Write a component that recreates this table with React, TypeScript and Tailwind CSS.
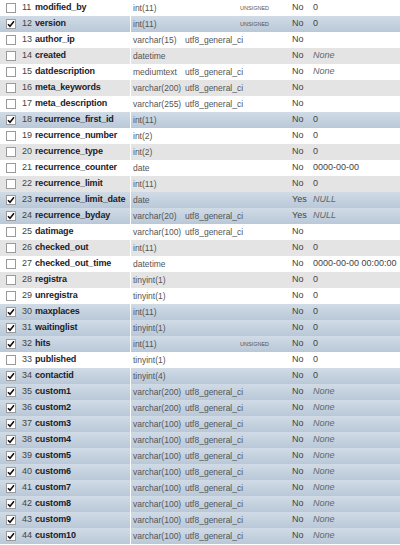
import React from "react";

type Row = {
  n: number;
  name: string;
  type: string;
  coll?: string;
  attr?: string;
  nul: string;
  def?: string;
  defItalic?: boolean;
  checked?: boolean;
};

const rows: Row[] = [
  { n: 11, name: "modified_by", type: "int(11)", attr: "UNSIGNED", nul: "No", def: "0" },
  { n: 12, name: "version", type: "int(11)", attr: "UNSIGNED", nul: "No", def: "0", checked: true },
  { n: 13, name: "author_ip", type: "varchar(15)", coll: "utf8_general_ci", nul: "No" },
  { n: 14, name: "created", type: "datetime", nul: "No", def: "None", defItalic: true },
  { n: 15, name: "datdescription", type: "mediumtext", coll: "utf8_general_ci", nul: "No", def: "None", defItalic: true },
  { n: 16, name: "meta_keywords", type: "varchar(200)", coll: "utf8_general_ci", nul: "No" },
  { n: 17, name: "meta_description", type: "varchar(255)", coll: "utf8_general_ci", nul: "No" },
  { n: 18, name: "recurrence_first_id", type: "int(11)", nul: "No", def: "0", checked: true },
  { n: 19, name: "recurrence_number", type: "int(2)", nul: "No", def: "0" },
  { n: 20, name: "recurrence_type", type: "int(2)", nul: "No", def: "0" },
  { n: 21, name: "recurrence_counter", type: "date", nul: "No", def: "0000-00-00" },
  { n: 22, name: "recurrence_limit", type: "int(11)", nul: "No", def: "0" },
  { n: 23, name: "recurrence_limit_date", type: "date", nul: "Yes", def: "NULL", defItalic: true, checked: true },
  { n: 24, name: "recurrence_byday", type: "varchar(20)", coll: "utf8_general_ci", nul: "Yes", def: "NULL", defItalic: true, checked: true },
  { n: 25, name: "datimage", type: "varchar(100)", coll: "utf8_general_ci", nul: "No" },
  { n: 26, name: "checked_out", type: "int(11)", nul: "No", def: "0" },
  { n: 27, name: "checked_out_time", type: "datetime", nul: "No", def: "0000-00-00 00:00:00" },
  { n: 28, name: "registra", type: "tinyint(1)", nul: "No", def: "0" },
  { n: 29, name: "unregistra", type: "tinyint(1)", nul: "No", def: "0" },
  { n: 30, name: "maxplaces", type: "int(11)", nul: "No", def: "0", checked: true },
  { n: 31, name: "waitinglist", type: "tinyint(1)", nul: "No", def: "0", checked: true },
  { n: 32, name: "hits", type: "int(11)", attr: "UNSIGNED", nul: "No", def: "0", checked: true },
  { n: 33, name: "published", type: "tinyint(1)", nul: "No", def: "0" },
  { n: 34, name: "contactid", type: "tinyint(4)", nul: "No", def: "0", checked: true },
  { n: 35, name: "custom1", type: "varchar(200)", coll: "utf8_general_ci", nul: "No", def: "None", defItalic: true, checked: true },
  { n: 36, name: "custom2", type: "varchar(200)", coll: "utf8_general_ci", nul: "No", def: "None", defItalic: true, checked: true },
  { n: 37, name: "custom3", type: "varchar(100)", coll: "utf8_general_ci", nul: "No", def: "None", defItalic: true, checked: true },
  { n: 38, name: "custom4", type: "varchar(100)", coll: "utf8_general_ci", nul: "No", def: "None", defItalic: true, checked: true },
  { n: 39, name: "custom5", type: "varchar(100)", coll: "utf8_general_ci", nul: "No", def: "None", defItalic: true, checked: true },
  { n: 40, name: "custom6", type: "varchar(100)", coll: "utf8_general_ci", nul: "No", def: "None", defItalic: true, checked: true },
  { n: 41, name: "custom7", type: "varchar(100)", coll: "utf8_general_ci", nul: "No", def: "None", defItalic: true, checked: true },
  { n: 42, name: "custom8", type: "varchar(100)", coll: "utf8_general_ci", nul: "No", def: "None", defItalic: true, checked: true },
  { n: 43, name: "custom9", type: "varchar(100)", coll: "utf8_general_ci", nul: "No", def: "None", defItalic: true, checked: true },
  { n: 44, name: "custom10", type: "varchar(100)", coll: "utf8_general_ci", nul: "No", def: "None", defItalic: true, checked: true },
];

function Box({ checked }: { checked?: boolean }) {
  return (
    <span className="flex h-[10px] w-[10px] shrink-0 items-center justify-center border border-[#9a9a9a] bg-white">
      {checked && (
        <svg width="8" height="8" viewBox="0 0 8 8">
          <path d="M1 4.2 L3 6.2 L7 1.2" fill="none" stroke="#111" strokeWidth="1.6" />
        </svg>
      )}
    </span>
  );
}

export default function App() {
  return (
    <div
      className="w-[400px] h-[545px] overflow-hidden bg-white"
      style={{ fontFamily: '"Liberation Sans", Arial, sans-serif' }}
    >
      {rows.map((r) => {
        const bg = r.checked
          ? "bg-gradient-to-b from-[#d0dbe6] to-[#b9c8d8]"
          : r.n % 2 === 0
          ? "bg-[#e4e4e4]"
          : "bg-white";
        return (
          <div key={r.n} className={`flex h-[16px] items-center ${bg}`}>
            <div className="flex h-full w-[131px] shrink-0 items-center overflow-hidden border-r border-white pl-[6px]">
              <Box checked={r.checked} />
              <span className="ml-[6px] w-[13px] shrink-0 text-[9px] text-[#444]">{r.n}</span>
              <span className="whitespace-nowrap text-[9px] font-bold tracking-[-0.15px] text-[#1b1b2a]">
                {r.name}
              </span>
            </div>
            <div className="w-[54px] shrink-0 whitespace-nowrap pl-[2px] text-[8.5px] text-[#555]">
              {r.type}
            </div>
            <div className="w-[55px] shrink-0 whitespace-nowrap text-[8.5px] text-[#555]">
              {r.coll ?? ""}
            </div>
            <div className="w-[52px] shrink-0 whitespace-nowrap text-[5.5px] text-[#555]">
              {r.attr ?? ""}
            </div>
            <div className="w-[21px] shrink-0 text-[9px] text-[#444]">{r.nul}</div>
            <div
              className={`whitespace-nowrap text-[9px] ${
                r.defItalic ? "italic text-[#666]" : "text-[#444]"
              }`}
            >
              {r.def ?? ""}
            </div>
          </div>
        );
      })}
    </div>
  );
}
